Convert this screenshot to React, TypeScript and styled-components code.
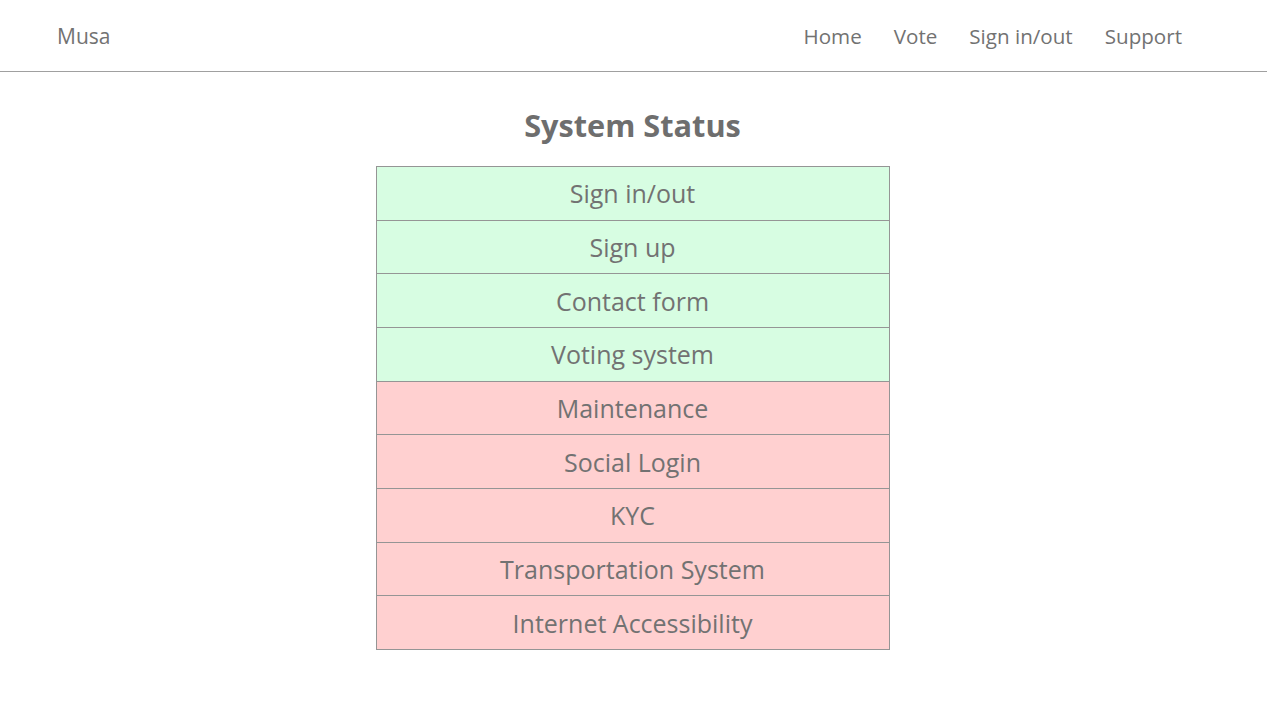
import React from "react"
import styled, {createGlobalStyle} from "styled-components"

const GlobalStyle = createGlobalStyle`
  html, body {
    margin: 0;
    padding: 0;
    background: #ffffff;
    font-family: 'Open Sans', 'Noto Sans', sans-serif;
    color: #727272;
  }
`

const Header = styled.header`
  height: 71px;
  border-bottom: 1px solid #a0a0a0;
  display: flex;
  align-items: center;
  justify-content: space-between;
  padding: 0 85px 0 57px;
`

const Logo = styled.div`
  font-size: 21px;
  color: #727272;
`

const Nav = styled.nav`
  display: flex;
  gap: 32px;
`

const NavLink = styled.a`
  font-size: 20.6px;
  color: #727272;
  text-decoration: none;
  cursor: pointer;
`

const Main = styled.main`
  display: flex;
  flex-direction: column;
  align-items: center;
  padding-right: 2px;
`

const Title = styled.h1`
  margin: 34px 0 22px;
  font-size: 30.7px;
  font-weight: 700;
  line-height: 38px;
  color: #6e6e6e;
`

const StatusList = styled.div`
  width: 512px;
  border: 1px solid #959595;
  display: flex;
  flex-direction: column;
`

type RowProps = {
    $ok: boolean
}

const StatusRow = styled.div<RowProps>`
  height: 52.67px;
  display: flex;
  align-items: center;
  justify-content: center;
  font-size: 25px;
  color: #727272;
  background: ${(p) => p.$ok ? "#d7fde2" : "#ffd0d0"};
  & + & {
    border-top: 1px solid #959595;
  }
`

const statuses = [
    {name: "Sign in/out", ok: true},
    {name: "Sign up", ok: true},
    {name: "Contact form", ok: true},
    {name: "Voting system", ok: true},
    {name: "Maintenance", ok: false},
    {name: "Social Login", ok: false},
    {name: "KYC", ok: false},
    {name: "Transportation System", ok: false},
    {name: "Internet Accessibility", ok: false},
]

const App = () => {
    return (
        <>
            <GlobalStyle/>
            <Header>
                <Logo>Musa</Logo>
                <Nav>
                    <NavLink>Home</NavLink>
                    <NavLink>Vote</NavLink>
                    <NavLink>Sign in/out</NavLink>
                    <NavLink>Support</NavLink>
                </Nav>
            </Header>
            <Main>
                <Title>System Status</Title>
                <StatusList>
                    {
                        statuses.map((s) => <StatusRow key={s.name} $ok={s.ok}>{s.name}</StatusRow>)
                    }
                </StatusList>
            </Main>
        </>
    )
}

export default App
